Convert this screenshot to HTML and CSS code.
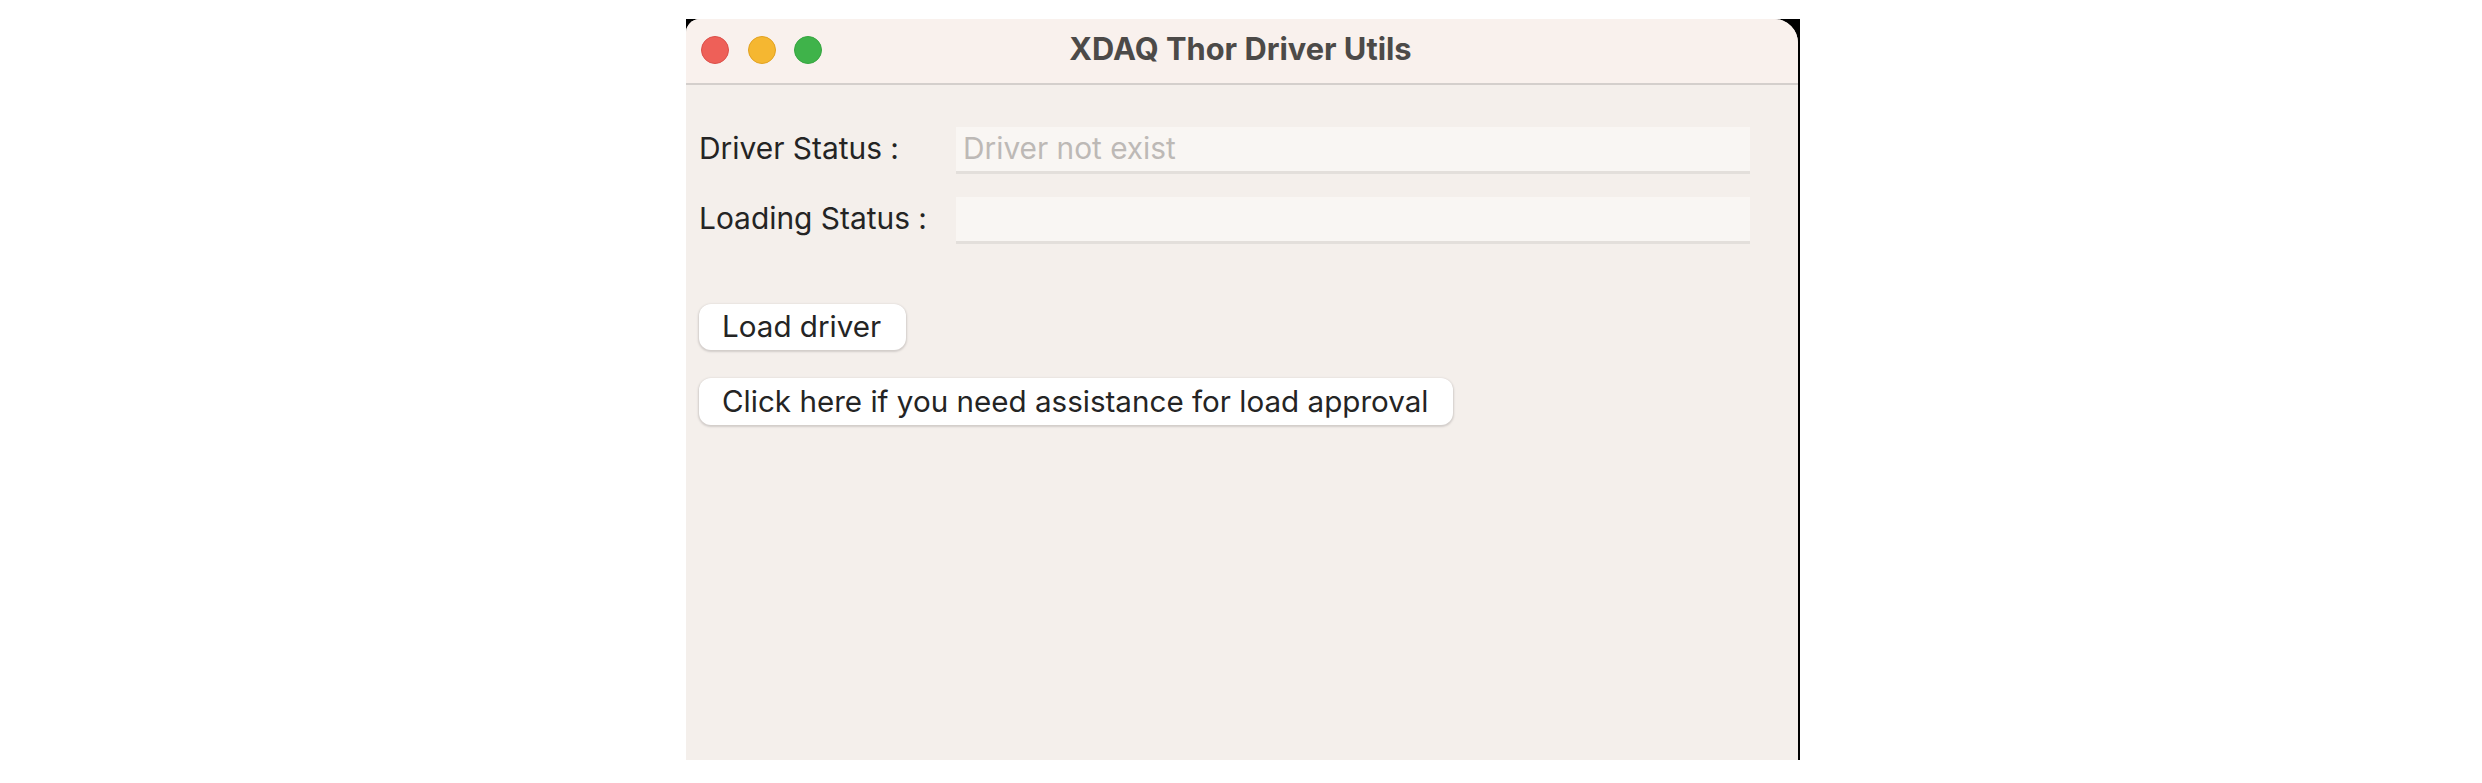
FILE: index.html
```html
<!DOCTYPE html>
<html>
<head lang="en">
  <meta charset="UTF-8">
  <title>XDAQ Thor Driver Utils</title>
  <link rel="stylesheet" href="styles.css">
</head>
<body>
<div class="frame">
  <div class="window">
    <div class="titlebar">
      <div class="lights">
        <span class="light red"></span>
        <span class="light yellow"></span>
        <span class="light green"></span>
      </div>
      <div class="title">XDAQ Thor Driver Utils</div>
    </div>
    <div class="content">
      <div class="row">
        <label class="label">Driver Status :</label>
        <div class="field">Driver not exist</div>
      </div>
      <div class="row">
        <label class="label">Loading Status :</label>
        <div class="field"></div>
      </div>
      <div class="actions">
        <button class="btn btn-load">Load driver</button>
        <button class="btn btn-help">Click here if you need assistance for load approval</button>
      </div>
    </div>
  </div>
</div>
</body>
</html>
```

FILE: styles.css
```css
* {
  margin: 0;
  padding: 0;
  box-sizing: border-box;
}

body {
  background-color: #fff;
  font-family: Inter, "Liberation Sans", sans-serif;
  color: #242424;
}

/* black shows through the top corners and down the right edge */
.frame {
  width: 1114px;
  height: 741px;
  margin: 19px 0 0 686px;
  padding-right: 2px;
  background-color: #000;
}

.window {
  height: 100%;
  display: flex;
  flex-direction: column;
  background-color: #f4efeb;
  border-radius: 14px 24px 0 0;
}

.titlebar {
  height: 66px;
  flex-shrink: 0;
  padding: 0 3px 5px 0;
  display: flex;
  align-items: center;
  justify-content: center;
  position: relative;
  background-color: #f9f1ed;
  border-bottom: 2px solid #d4cfcc;
  border-radius: 14px 24px 0 0;
}

.lights {
  position: absolute;
  left: 15px;
  top: 17px;
  display: flex;
  gap: 18.5px;
}

.light {
  width: 28px;
  height: 28px;
  border-radius: 50%;
}

.red {
  background-color: #ee6058;
  border: 1px solid #dc4f49;
}

.yellow {
  background-color: #f5b731;
  border: 1px solid #e2a221;
}

.green {
  background-color: #3fb34a;
  border: 1px solid #36a640;
}

.title {
  font-size: 30.8px;
  font-weight: 700;
  color: #4c4a48;
}

.content {
  padding: 42px 0 0 13px;
}

.row {
  height: 47px;
  margin-bottom: 23px;
  display: flex;
}

.label {
  width: 257px;
  height: 43px;
  line-height: 43px;
  font-size: 29.9px;
}

.field {
  width: 794px;
  height: 47px;
  padding-left: 7px;
  line-height: 43px;
  font-size: 29.8px;
  color: #bdb9b6;
  background-color: #f9f6f3;
  border-bottom: 3px solid #e3dfdb;
}

.actions {
  margin-top: 60px;
  display: flex;
  flex-direction: column;
  align-items: flex-start;
  gap: 28px;
}

.btn {
  height: 46px;
  padding: 0 0 2px 23px;
  font-family: inherit;
  font-size: 29.6px;
  text-align: left;
  color: #242424;
  background-color: #fff;
  border: none;
  border-radius: 12px;
  box-shadow: 0 1px 2px 1px #d2cdca;
}

.btn-load {
  width: 207px;
}

.btn-help {
  width: 754px;
  height: 47px;
}
```
